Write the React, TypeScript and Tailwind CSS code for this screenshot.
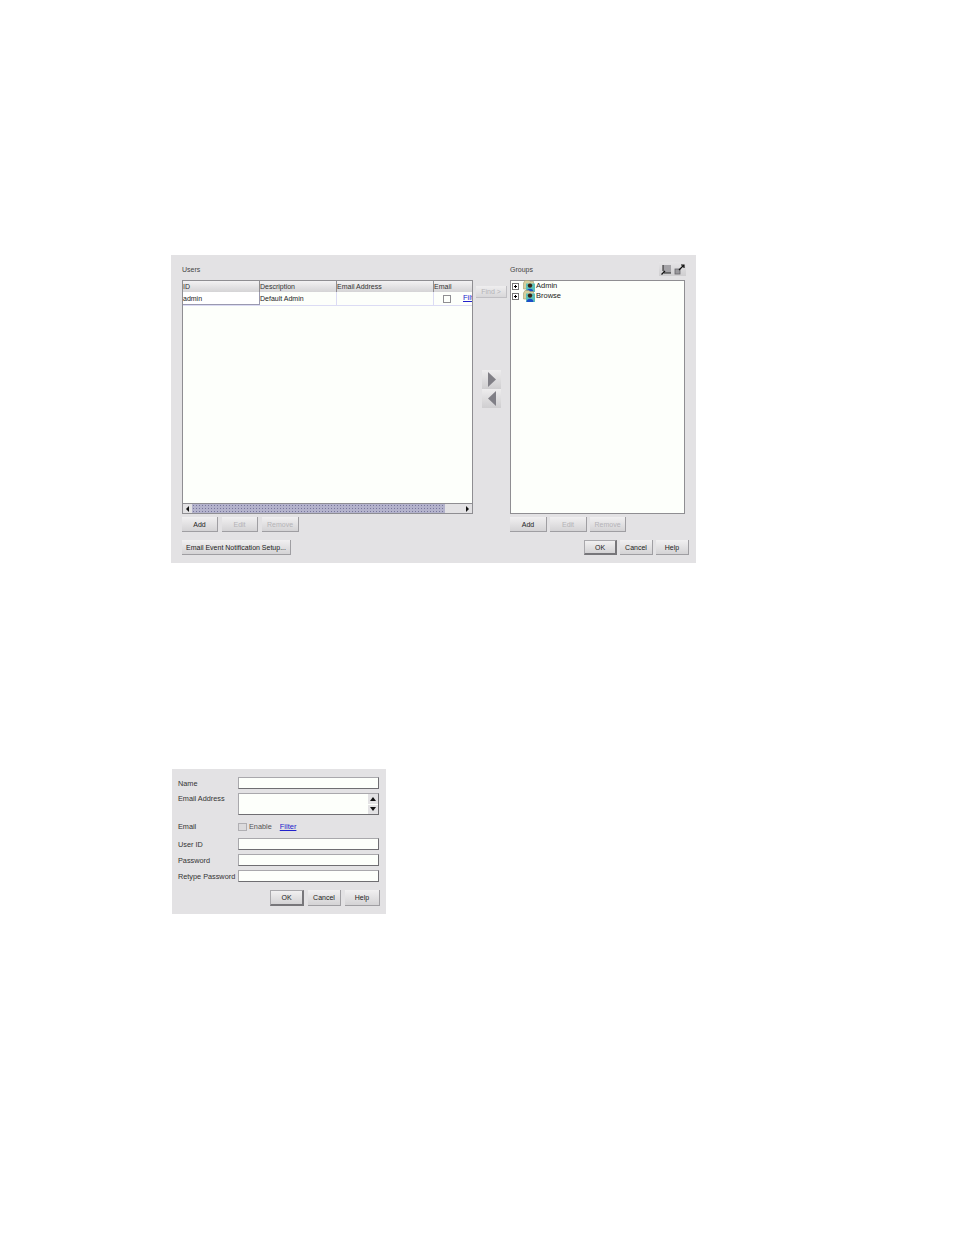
import React from 'react';

const font = { fontFamily: '"Liberation Sans", Arial, sans-serif' };

const Btn: React.FC<{ label: string; w: string; h?: string; disabled?: boolean; strong?: boolean }> = ({ label, w, h = 'h-[15px]', disabled, strong }) => (
    <div
        className={`${w} ${h} flex items-center justify-center text-[7px] leading-none bg-gradient-to-b from-[#f1f0f1] to-[#d4d3d5] ${strong ? 'border border-[#a9a8ac] border-b-2 border-r-2 border-b-[#77767a] border-r-[#77767a]' : 'border-b border-r border-[#9f9ea2]'} ${disabled ? 'text-[#b4b3b7]' : 'text-[#222]'}`}
    >
        {label}
    </div>
);

const GroupIcon = () => (
    <svg width="12" height="12" viewBox="0 0 12 12" className="shrink-0 -my-px">
        <path d="M0.5 3 L2 0.5 H6 L7 1.5 H10.5 V9 H0.5 Z" fill="#d8cf9c" stroke="#a09a70" strokeWidth="0.6" />
        <rect x="3" y="3.5" width="9" height="8.5" fill="#5cc0b8" />
        <circle cx="7" cy="5.6" r="2.2" fill="#3c2414" />
        <path d="M3.5 12 C3.5 7.5 10.5 7.5 10.5 12 Z" fill="#1c4fc8" />
    </svg>
);

const Expander = () => (
    <div className="w-[7px] h-[7px] border border-[#777] bg-white flex items-center justify-center relative shrink-0">
        <div className="w-[3px] h-px bg-black" />
        <div className="absolute w-px h-[3px] bg-black" />
    </div>
);

const TreeRow: React.FC<{ label: string }> = ({ label }) => (
    <div className="h-[10px] flex items-center text-[7.5px] leading-none text-[#222]">
        <Expander />
        <div className="w-[4px]" />
        <GroupIcon />
        <span className="ml-[1px]">{label}</span>
    </div>
);

const HeadCell: React.FC<{ label: string; w: string }> = ({ label, w }) => (
    <div className={`${w} h-full flex items-center text-[7px] leading-none text-[#333] border-r border-[#8f8e92] bg-gradient-to-b from-[#f3f2f3] to-[#d5d4d6]`}>
        {label}
    </div>
);

const Field: React.FC<{ label: string; mt: string }> = ({ label, mt }) => (
    <div className={`flex items-center h-[12px] ${mt}`}>
        <div className="w-[66px] pl-[6px] pt-[2px] text-[7.3px] leading-none text-[#333] whitespace-nowrap">{label}</div>
        <div className="w-[141px] h-[12px] bg-[#fdfffb] border border-[#a9a8ac] border-b-[#6f6e72] border-r-[#6f6e72]" />
    </div>
);

const ArrowBtn: React.FC<{ d: string; mt: string }> = ({ d, mt }) => (
    <div className={`${mt} w-[19px] h-[19px] flex items-center justify-center bg-gradient-to-b from-[#eeedee] to-[#cfced0]`}>
        <svg width="10" height="15" viewBox="0 0 10 15">
            <path d={d} fill="#807f86" />
        </svg>
    </div>
);

const App: React.FC = () => {
    return (
        <div className="w-[954px] h-[1235px] bg-white pt-[255px]" style={font}>
            {/* Users and groups dialog */}
            <div className="ml-[171px] w-[525px] h-[308px] bg-[#e3e2e4] pl-[11px] pr-[7px] pt-[10px]">
                <div className="flex">
                    {/* Users */}
                    <div className="w-[291px]">
                        <div className="h-[15px] text-[7px] leading-none text-[#444] pt-px">Users</div>
                        <div className="h-[234px] border border-[#8f8e92] bg-[#fdfffb] flex flex-col">
                            <div className="h-[11px] flex shrink-0">
                                <HeadCell label="ID" w="w-[77px]" />
                                <HeadCell label="Description" w="w-[77px]" />
                                <HeadCell label="Email Address" w="w-[97px]" />
                                <div className="flex-1 h-full flex items-center text-[7px] leading-none text-[#333] bg-gradient-to-b from-[#f3f2f3] to-[#d5d4d6]">Email</div>
                            </div>
                            <div className="h-[14px] flex text-[7px] leading-none text-[#222] border-b border-[#dcdcf4] shrink-0">
                                <div className="w-[77px] flex items-center bg-white border-b border-r border-[#9a99b0]">admin</div>
                                <div className="w-[77px] flex items-center border-r border-[#dcdcf4]">Default Admin</div>
                                <div className="w-[97px] border-r border-[#dcdcf4]" />
                                <div className="flex-1 flex items-center">
                                    <div className="w-[8px] h-[8px] border border-[#8f8e92] ml-[9px] shrink-0" />
                                    <div className="ml-[12px] h-[9px] w-[9px] overflow-hidden text-[7.5px] text-[#2222cc] underline whitespace-nowrap">Filter</div>
                                </div>
                            </div>
                            <div className="flex-1" />
                            <div className="h-[10px] flex items-center bg-[#e3e2e4] border-t border-[#8f8e92] shrink-0">
                                <svg width="9" height="8" viewBox="0 0 9 8" className="shrink-0"><path d="M3 4 L6 1 V7 Z" fill="#111" /></svg>
                                <div className="w-[253px] h-full bg-[#b4b3cc] bg-[radial-gradient(#77769c_0.7px,transparent_0.8px)] bg-[length:3px_3px]" />
                                <div className="flex-1" />
                                <svg width="9" height="8" viewBox="0 0 9 8" className="shrink-0"><path d="M3 1 L6 4 L3 7 Z" fill="#111" /></svg>
                            </div>
                        </div>
                        <div className="flex gap-[4px] mt-[3px]">
                            <Btn label="Add" w="w-[36px]" />
                            <Btn label="Edit" w="w-[36px]" disabled />
                            <Btn label="Remove" w="w-[37px]" disabled />
                        </div>
                        <div className="mt-[8px]">
                            <Btn label="Email Event Notification Setup..." w="w-[109px]" />
                        </div>
                    </div>

                    {/* Find and move buttons */}
                    <div className="w-[37px] flex flex-col items-center pt-[21px]">
                        <div className="w-[31px] h-[12px] flex items-center justify-center text-[7px] leading-none text-[#b4b3b7] bg-gradient-to-b from-[#efeeef] to-[#d8d7d9] border-b border-r border-[#c0bfc3]">Find &gt;</div>
                        <ArrowBtn d="M1 0 L9 7.5 L1 15 Z" mt="mt-[72px]" />
                        <ArrowBtn d="M9 0 L1 7.5 L9 15 Z" mt="mt-0" />
                    </div>

                    {/* Groups */}
                    <div className="flex-1">
                        <div className="h-[15px] w-[175px] flex justify-between items-start">
                            <span className="text-[7px] leading-none text-[#444] pt-px">Groups</span>
                            <div className="w-[27px] h-[14px] -mt-[3px] -mr-px bg-gradient-to-b from-[#e6e5e7] to-[#cfced0] flex items-center justify-center gap-[2px]">
                                <svg width="11" height="11" viewBox="0 0 11 11">
                                    <rect x="2" y="1" width="8" height="8" fill="#a4a3a7" />
                                    <path d="M2 1 V7 M3 9 H10" fill="none" stroke="#222" strokeWidth="1" />
                                    <path d="M4 7 L0.5 10.5" stroke="#111" strokeWidth="1.3" />
                                </svg>
                                <svg width="11" height="11" viewBox="0 0 11 11">
                                    <rect x="1" y="5" width="5" height="5" fill="#9a999d" stroke="#66656a" strokeWidth="0.8" />
                                    <path d="M5 6 L10 1 M7 1 H10 V4" fill="none" stroke="#111" strokeWidth="1.2" />
                                </svg>
                            </div>
                        </div>
                        <div className="w-[175px] h-[234px] border border-[#8f8e92] bg-[#fdfffb] pl-px">
                            <TreeRow label="Admin" />
                            <TreeRow label="Browse" />
                        </div>
                        <div className="flex gap-[3px] mt-[3px]">
                            <Btn label="Add" w="w-[37px]" />
                            <Btn label="Edit" w="w-[37px]" disabled />
                            <Btn label="Remove" w="w-[36px]" disabled />
                        </div>
                        <div className="flex gap-[3px] mt-[8px] ml-[74px]">
                            <Btn label="OK" w="w-[33px]" strong />
                            <Btn label="Cancel" w="w-[33px]" />
                            <Btn label="Help" w="w-[33px]" />
                        </div>
                    </div>
                </div>
            </div>

            {/* New user dialog */}
            <div className="mt-[206px] ml-[172px] w-[214px] h-[145px] bg-[#e3e2e4] pt-[8px]">
                <Field label="Name" mt="" />
                <div className="flex mt-[4px] h-[22px]">
                    <div className="w-[66px] pl-[6px] pt-[2px] text-[7.3px] leading-none text-[#333]">Email Address</div>
                    <div className="w-[141px] h-[22px] bg-[#fdfffb] border border-[#a9a8ac] border-b-[#6f6e72] border-r-[#6f6e72] flex justify-end">
                        <div className="w-[10px] h-full flex flex-col gap-px">
                            <div className="flex-1 bg-[#e3e2e4] flex items-center justify-center">
                                <svg width="6" height="4" viewBox="0 0 6 4"><path d="M3 0 L6 4 H0 Z" fill="#111" /></svg>
                            </div>
                            <div className="flex-1 bg-[#e3e2e4] flex items-center justify-center">
                                <svg width="6" height="4" viewBox="0 0 6 4"><path d="M0 0 H6 L3 4 Z" fill="#111" /></svg>
                            </div>
                        </div>
                    </div>
                </div>
                <div className="flex items-center h-[10px] mt-[7px] text-[7.3px] leading-none text-[#333]">
                    <div className="w-[66px] pl-[6px]">Email</div>
                    <div className="w-[9px] h-[8px] border border-[#b0afb3] bg-[#dcdbdd]" />
                    <span className="ml-[2px] text-[#555]">Enable</span>
                    <span className="ml-[8px] text-[7.5px] text-[#2222cc] underline">Filter</span>
                </div>
                <Field label="User ID" mt="mt-[6px]" />
                <Field label="Password" mt="mt-[4px]" />
                <Field label="Retype Password" mt="mt-[4px]" />
                <div className="flex gap-[4px] mt-[8px] ml-[98px]">
                    <Btn label="OK" w="w-[34px]" h="h-[16px]" strong />
                    <Btn label="Cancel" w="w-[33px]" h="h-[16px]" />
                    <Btn label="Help" w="w-[35px]" h="h-[16px]" />
                </div>
            </div>
        </div>
    );
};

export default App;
